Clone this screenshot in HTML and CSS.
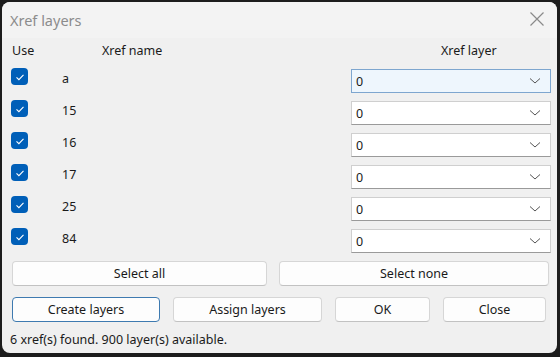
FILE: index.html
```html
<!DOCTYPE html>
<html>
<head>
	<meta charset="UTF-8">
	<title>Xref layers</title>
	<link rel="stylesheet" href="styles.css">
</head>
<body>
	<div class="dialog">
		<div class="titlebar">
			<span class="title">Xref layers</span>
			<svg class="close" width="16" height="16" viewBox="0 0 16 16">
				<path d="M1.5 1.5 L14.5 14.5 M14.5 1.5 L1.5 14.5" stroke="#8a8a8a" stroke-width="1.2" fill="none"/>
			</svg>
		</div>
		<div class="head">
			<span class="h-use">Use</span>
			<span class="h-name">Xref name</span>
			<span class="h-layer">Xref layer</span>
		</div>
		<div class="rows">
			<div class="row">
				<span class="check"><svg width="16" height="16" viewBox="0 0 16 16"><path d="M4.5 8.3 L6.9 10.6 L11.5 5.8" stroke="#fff" stroke-width="1.1" fill="none"/></svg></span>
				<span class="name">a</span>
				<div class="combo focus"><span>0</span><svg width="12" height="8" viewBox="0 0 12 8"><path d="M1 1.5 L6 6 L11 1.5" stroke="#555" stroke-width="1" fill="none"/></svg></div>
			</div>
			<div class="row">
				<span class="check"><svg width="16" height="16" viewBox="0 0 16 16"><path d="M4.5 8.3 L6.9 10.6 L11.5 5.8" stroke="#fff" stroke-width="1.1" fill="none"/></svg></span>
				<span class="name">15</span>
				<div class="combo"><span>0</span><svg width="12" height="8" viewBox="0 0 12 8"><path d="M1 1.5 L6 6 L11 1.5" stroke="#555" stroke-width="1" fill="none"/></svg></div>
			</div>
			<div class="row">
				<span class="check"><svg width="16" height="16" viewBox="0 0 16 16"><path d="M4.5 8.3 L6.9 10.6 L11.5 5.8" stroke="#fff" stroke-width="1.1" fill="none"/></svg></span>
				<span class="name">16</span>
				<div class="combo"><span>0</span><svg width="12" height="8" viewBox="0 0 12 8"><path d="M1 1.5 L6 6 L11 1.5" stroke="#555" stroke-width="1" fill="none"/></svg></div>
			</div>
			<div class="row">
				<span class="check"><svg width="16" height="16" viewBox="0 0 16 16"><path d="M4.5 8.3 L6.9 10.6 L11.5 5.8" stroke="#fff" stroke-width="1.1" fill="none"/></svg></span>
				<span class="name">17</span>
				<div class="combo"><span>0</span><svg width="12" height="8" viewBox="0 0 12 8"><path d="M1 1.5 L6 6 L11 1.5" stroke="#555" stroke-width="1" fill="none"/></svg></div>
			</div>
			<div class="row">
				<span class="check"><svg width="16" height="16" viewBox="0 0 16 16"><path d="M4.5 8.3 L6.9 10.6 L11.5 5.8" stroke="#fff" stroke-width="1.1" fill="none"/></svg></span>
				<span class="name">25</span>
				<div class="combo"><span>0</span><svg width="12" height="8" viewBox="0 0 12 8"><path d="M1 1.5 L6 6 L11 1.5" stroke="#555" stroke-width="1" fill="none"/></svg></div>
			</div>
			<div class="row">
				<span class="check"><svg width="16" height="16" viewBox="0 0 16 16"><path d="M4.5 8.3 L6.9 10.6 L11.5 5.8" stroke="#fff" stroke-width="1.1" fill="none"/></svg></span>
				<span class="name">84</span>
				<div class="combo"><span>0</span><svg width="12" height="8" viewBox="0 0 12 8"><path d="M1 1.5 L6 6 L11 1.5" stroke="#555" stroke-width="1" fill="none"/></svg></div>
			</div>
		</div>
		<div class="select-bar">
			<div class="btn sel-all">Select all</div>
			<div class="btn sel-none">Select none</div>
		</div>
		<div class="action-bar">
			<div class="btn create">Create layers</div>
			<div class="btn assign">Assign layers</div>
			<div class="btn ok">OK</div>
			<div class="btn close-btn">Close</div>
		</div>
		<div class="status">6 xref(s) found. 900 layer(s) available.</div>
	</div>
</body>
</html>
```

FILE: styles.css
```css
body {
	margin: 0;
	padding: 0;
	background-color: #1c1c1c;
	font-family: "Noto Sans", "Open Sans", sans-serif;
	font-size: 12.5px;
	color: #1a1a1a;
}

.dialog {
	margin: 2px 0 0 2px;
	width: 555px;
	height: 351px;
	background-color: #f0f0f0;
	border-radius: 8px;
	overflow: hidden;
	box-sizing: border-box;
}

.titlebar {
	display: flex;
	align-items: center;
	justify-content: space-between;
	height: 36px;
	padding: 0 12px 0 8px;
	background-color: #f3f3f3;
}

.title {
	font-size: 14.5px;
	color: #8c8c8c;
	margin-top: -1px;
}

.close {
	margin-top: -2px;
}

.head {
	display: flex;
	height: 24px;
	align-items: center;
	padding-left: 10px;
}

.h-use {
	width: 90px;
}

.h-name {
	width: 339px;
}

.rows {
	display: flex;
	flex-direction: column;
	gap: 8px;
	margin-top: 7px;
}

.row {
	display: flex;
	align-items: flex-start;
	height: 24px;
}

.check {
	display: flex;
	width: 17px;
	height: 17px;
	margin: -1px 0 0 9px;
	background-color: #005fb8;
	border-radius: 4px;
	align-items: center;
	justify-content: center;
}

.name {
	width: 289px;
	margin-left: 34px;
	margin-top: 1px;
}

.combo {
	display: flex;
	align-items: center;
	justify-content: space-between;
	width: 200px;
	height: 24px;
	box-sizing: border-box;
	border: 1px solid #cfcfcf;
	border-bottom-color: #9a9a9a;
	background-color: #fff;
	padding: 0 9px 0 4px;
}

.combo.focus {
	background-color: #eef6fd;
	border-color: #7ea6cf;
}

.select-bar {
	display: flex;
	gap: 12px;
	margin: 8px 0 0 10px;
	width: 537px;
}

.btn {
	display: flex;
	align-items: center;
	justify-content: center;
	height: 25px;
	box-sizing: border-box;
	background-color: #fdfdfd;
	border: 1px solid #d6d6d6;
	border-bottom-color: #c2c2c2;
	border-radius: 4px;
}

.sel-all {
	width: 256px;
}

.sel-none {
	width: 271px;
}

.action-bar {
	display: flex;
	gap: 13px;
	margin: 11px 0 0 10px;
}

.create {
	width: 148px;
	border-color: #3e7ab0;
}

.assign {
	width: 149px;
}

.ok {
	width: 95px;
}

.close-btn {
	width: 103px;
}

.status {
	margin: 9px 0 0 8px;
}
```
